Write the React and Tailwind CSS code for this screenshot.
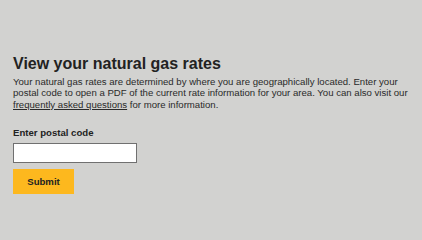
export default function App() {
  return (
    <div className="w-[422px] h-[240px] bg-[#d2d2d0] text-[#222] font-['Liberation_Sans',Arial,sans-serif] overflow-hidden">
      <div className="pl-[13px] pr-[10px] pt-[54px]">
        <h1 className="text-[16px] leading-[19px] font-bold">View your natural gas rates</h1>
        <p className="mt-[3px] text-[9.6px] leading-[11.4px] text-[#2a2a2a]">
          Your natural gas rates are determined by where you are geographically located. Enter your postal code to open a PDF of the current rate information for your area. You can also visit our{" "}
          <a href="#" className="underline">frequently asked questions</a> for more information.
        </p>
        <label className="block mt-[17px] text-[9.6px] leading-[12px] font-bold">Enter postal code</label>
        <input type="text" className="block mt-[4px] w-[124px] h-[20px] bg-white border border-[#707070]" />
        <button className="mt-[6px] w-[61px] h-[25px] bg-[#fdb81e] text-[9.6px] font-bold">Submit</button>
      </div>
    </div>
  )
}
